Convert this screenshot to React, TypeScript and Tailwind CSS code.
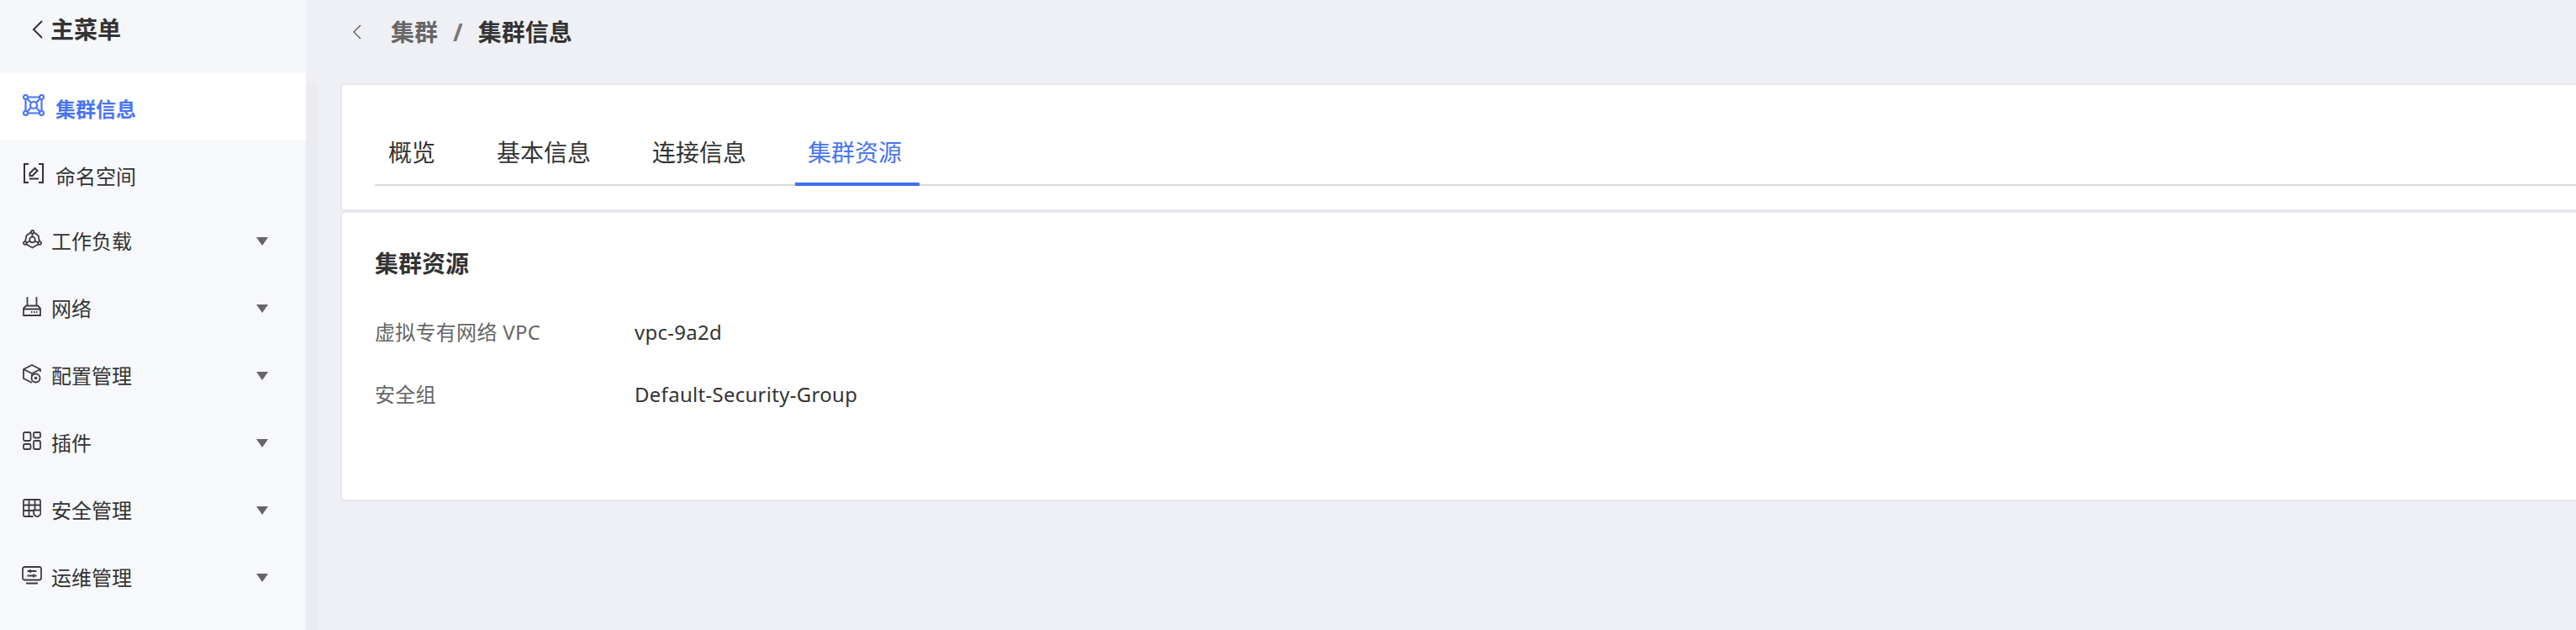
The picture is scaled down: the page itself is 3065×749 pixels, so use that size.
import { ReactNode } from 'react';

const cjk = 'font-["Noto_Sans","Noto_Sans_CJK_SC",sans-serif]';

const iconClass = 'shrink-0 fill-none stroke-[#3d3d3d] stroke-[1.800]';

const menuItems: { label: string; icon: ReactNode }[] = [
  {
    label: '工作负载',
    icon: (
      <svg width="23" height="23" viewBox="0 0 23 23" className={iconClass}>
        <path d="M9.500 3.500 4.500 7l-1.500 7M13.500 3.500l5 3.500 1.500 7M4.500 17.500l7 4 7-4" />
        <circle cx="11.500" cy="2.800" r="1.800" />
        <circle cx="2.800" cy="16" r="1.800" />
        <circle cx="20.200" cy="16" r="1.800" />
        <circle cx="11.500" cy="12" r="3.300" />
        <path d="M11.500 4.500v4.200M8.700 13.700 4.500 15.500M14.300 13.700l4.200 1.800" />
      </svg>
    ),
  },
  {
    label: '网络',
    icon: (
      <svg width="22" height="23" viewBox="0 0 22 23" className={iconClass}>
        <path d="M5.500 0v11M16.500 0v11" />
        <path d="M1 13.500 4 10.500h14l3 3V22H1zM1 14.500h20" />
        <path d="M10 18h1.500M13 18h1.500M16 18h1.500" />
      </svg>
    ),
  },
  {
    label: '配置管理',
    icon: (
      <svg width="22" height="23" viewBox="0 0 22 23" className={iconClass}>
        <path d="M21 9V6L11 1 1 6v11l10 5" />
        <path d="M1 6l10 5 10-5M11 11v4" />
        <circle cx="15.500" cy="16.500" r="5" />
        <circle cx="15.500" cy="16.500" r="0.900" />
      </svg>
    ),
  },
  {
    label: '插件',
    icon: (
      <svg width="22" height="22" viewBox="0 0 22 22" className={iconClass}>
        <rect x="1" y="1" width="8.500" height="10" rx="1.500" />
        <rect x="13" y="1" width="8" height="6.500" rx="1.500" />
        <rect x="1" y="15" width="8.500" height="6" rx="1.500" />
        <rect x="13" y="11" width="8" height="10" rx="1.500" />
      </svg>
    ),
  },
  {
    label: '安全管理',
    icon: (
      <svg width="22" height="22" viewBox="0 0 22 22" className={iconClass}>
        <path d="M12.500 21H2.500A1.500 1.500 0 0 1 1 19.500V2.500A1.500 1.500 0 0 1 2.500 1h17A1.500 1.500 0 0 1 21 2.500V13" />
        <path d="M1 7.500h20M1 14h11.500M7.500 1v20M14.500 1v12" />
        <path d="M13 13.500h8.500v3.500c0 2.300-2.200 3.500-4.300 4.500-2-1-4.200-2.200-4.200-4.500z" />
      </svg>
    ),
  },
  {
    label: '运维管理',
    icon: (
      <svg width="24" height="22" viewBox="0 0 24 22" className={iconClass}>
        <rect x="1" y="1" width="22" height="15.500" rx="2.500" />
        <path d="M5 20.500h14M6.500 6h11M6.500 11.500h11M10 4v4M14 9.500v4" />
      </svg>
    ),
  },
];

function Caret() {
  return <span className="ml-auto mr-[45px] h-0 w-0 border-x-[7px] border-t-[10px] border-x-transparent border-t-[#666]" />;
}

export default function App() {
  return (
    <div className={`flex h-[749px] w-full overflow-hidden bg-[#eff0f5] text-[#333] ${cjk}`}>
      <aside className="flex w-[364px] shrink-0 flex-col bg-[#f7f8fb]">
        <div className="flex h-[87px] items-center bg-[#f5f7fa] pb-[17px] pl-[36px]">
          <svg width="16" height="24" viewBox="0 0 16 24" className="fill-none stroke-[#333] stroke-[2]">
            <path d="M14 2 4 12l10 10" />
          </svg>
          <span className="ml-[8px] text-[28px] font-bold leading-none">主菜单</span>
        </div>

        <div className="flex h-[80px] items-center bg-white pl-[27px] text-[#4974f5]">
          <svg width="26" height="26" viewBox="0 0 26 26" className="mt-[-4px] fill-none stroke-[#4974f5] stroke-[2.200]">
            <circle cx="3.500" cy="3.500" r="2.500" />
            <circle cx="22.500" cy="3.500" r="2.500" />
            <circle cx="3.500" cy="22.500" r="2.500" />
            <circle cx="22.500" cy="22.500" r="2.500" />
            <circle cx="13" cy="13" r="4" />
            <path d="M6 3.500h14M6 22.500h14M3.500 6v14M22.500 6v14M5.500 5.500l4.500 4.500M20.500 5.500 16 10M5.500 20.500l4.500-4.500M20.500 20.500 16 16" />
          </svg>
          <span className="ml-[13px] mt-[6px] text-[24px] font-bold leading-none">集群信息</span>
        </div>

        <div className="flex h-[80px] items-center pl-[28px]">
          <svg width="24" height="24" viewBox="0 0 24 24" className="mt-[-2px] fill-none stroke-[#333] stroke-[2]">
            <path d="M6 1H1v22h5M18 1h5v22h-5" />
            <path d="M7.500 15v-3l6-6 3 3-6 6zM7 18.500h11" />
          </svg>
          <span className="ml-[14px] mt-[6px] text-[24px] leading-none">命名空间</span>
        </div>

        {menuItems.map((item) => (
          <div key={item.label} className="flex h-[80px] items-center pl-[27px]">
            <span className="mt-[-6px] flex w-[22px] justify-center">{item.icon}</span>
            <span className="ml-[12px] text-[24px] leading-none">{item.label}</span>
            <Caret />
          </div>
        ))}
      </aside>

      <div className="mt-[99px] w-[14px] shrink-0 bg-[#ebecf1]" />

      <main className="min-w-0 flex-1 pl-[27px]">
        <div className="flex h-[99px] items-start pt-[19px]">
          <div className="ml-[14px] flex h-[38px] items-center">
            <svg width="11" height="18" viewBox="0 0 11 18" className="fill-none stroke-[#666] stroke-[1.500]">
              <path d="M10 1 2 9l8 8" />
            </svg>
            <span className="ml-[35px] text-[28px] font-bold leading-none text-[#666]">集群</span>
            <span className="mx-[18px] text-[28px] font-bold leading-none text-[#777]">/</span>
            <span className="text-[28px] font-bold leading-none">集群信息</span>
          </div>
        </div>

        <section className="h-[152px] rounded-l-[4px] border-2 border-r-0 border-[#e4e6ef] bg-white pl-[39px] pt-[50px]">
          <div className="flex h-[70px] gap-[41px] border-b-2 border-[#d6d7da]">
            {['概览', '基本信息', '连接信息'].map((tab) => (
              <div key={tab} className="px-[16px] pt-[16px] text-[28px] leading-none">{tab}</div>
            ))}
            <div className="mb-[-2px] ml-[1px] h-[70px] border-b-4 border-[#3f70f0] pl-[15px] pr-[21px] pt-[16px] text-[28px] leading-none text-[#4974f5]">集群资源</div>
          </div>
        </section>

        <section className="h-[345px] rounded-l-[4px] border-2 border-r-0 border-[#e4e6ef] bg-white pl-[39px] pt-[46px]">
          <h2 className="text-[28px] font-bold leading-none">集群资源</h2>
          <dl className="mt-[50px] flex flex-col gap-[38px] text-[24px] leading-[36px] tracking-[0.28px]">
            <div className="flex">
              <dt className="w-[309px] text-[#666]">虚拟专有网络 VPC</dt>
              <dd>vpc-9a2d</dd>
            </div>
            <div className="flex">
              <dt className="w-[309px] text-[#666]">安全组</dt>
              <dd>Default-Security-Group</dd>
            </div>
          </dl>
        </section>
      </main>
    </div>
  );
}
